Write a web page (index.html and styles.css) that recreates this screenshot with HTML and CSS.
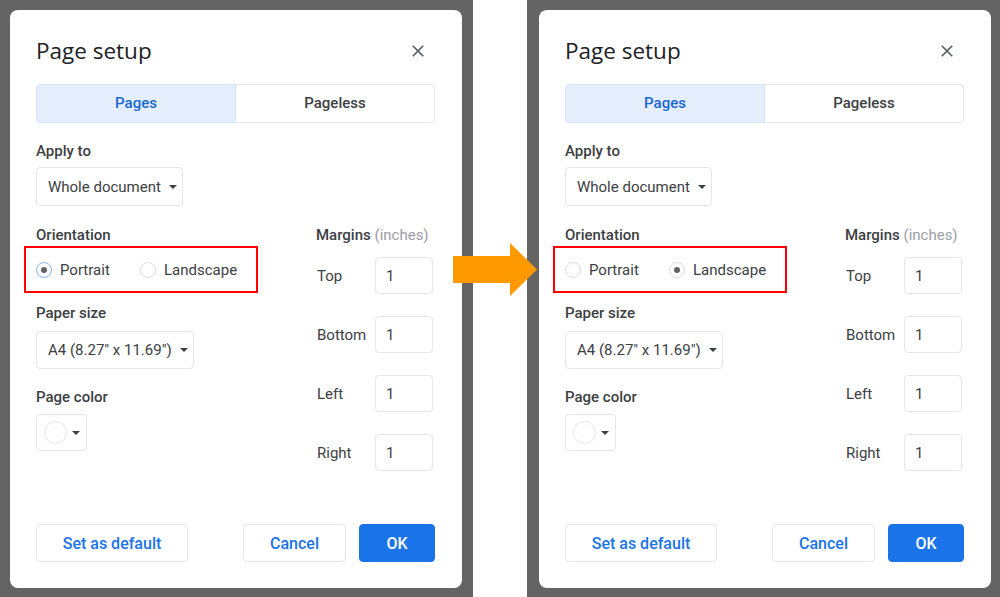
FILE: index.html
```html
<!DOCTYPE html>
<html>
<head>
<meta charset="utf-8">
<link rel="stylesheet" href="styles.css">
</head>
<body>
<div class="stage">
  <div class="panel panel-left">
    <div class="dialog">
      <div class="header">
        <div class="title">Page setup</div>
        <svg class="close" viewBox="0 0 24 24" width="20" height="20"><path d="M19 6.41L17.59 5 12 10.59 6.41 5 5 6.41 10.59 12 5 17.59 6.41 19 12 13.41 17.59 19 19 17.59 13.41 12z" fill="#5f6368"/></svg>
      </div>
      <div class="tabs">
        <div class="tab tab-active">Pages</div>
        <div class="tab">Pageless</div>
      </div>
      <div class="label label-apply">Apply to</div>
      <div class="select select-apply"><span>Whole document</span><span class="caret"></span></div>
      <div class="cols">
        <div class="col-left">
          <div class="label">Orientation</div>
          <div class="redbox">
            <div class="opt opt-first"><span class="radio radio-on radio-focus"></span><span>Portrait</span></div>
            <div class="opt"><span class="radio"></span><span>Landscape</span></div>
          </div>
          <div class="label label-paper">Paper size</div>
          <div class="select select-paper"><span>A4 (8.27" x 11.69")</span><span class="caret"></span></div>
          <div class="label label-color">Page color</div>
          <div class="colorbtn"><span class="swatch"></span><span class="caret"></span></div>
        </div>
        <div class="col-right">
          <div class="label">Margins <span class="muted">(inches)</span></div>
          <div class="mrows">
            <div class="mrow"><span class="mlabel">Top</span><span class="minput">1</span></div>
            <div class="mrow"><span class="mlabel">Bottom</span><span class="minput">1</span></div>
            <div class="mrow"><span class="mlabel">Left</span><span class="minput">1</span></div>
            <div class="mrow"><span class="mlabel">Right</span><span class="minput">1</span></div>
          </div>
        </div>
      </div>
      <div class="footer">
        <div class="btn btn-default">Set as default</div>
        <div class="spacer"></div>
        <div class="btn btn-cancel">Cancel</div>
        <div class="btn btn-ok">OK</div>
      </div>
    </div>
  </div>
  <div class="panel panel-right">
    <div class="dialog">
      <div class="header">
        <div class="title">Page setup</div>
        <svg class="close" viewBox="0 0 24 24" width="20" height="20"><path d="M19 6.41L17.59 5 12 10.59 6.41 5 5 6.41 10.59 12 5 17.59 6.41 19 12 13.41 17.59 19 19 17.59 13.41 12z" fill="#5f6368"/></svg>
      </div>
      <div class="tabs">
        <div class="tab tab-active">Pages</div>
        <div class="tab">Pageless</div>
      </div>
      <div class="label label-apply">Apply to</div>
      <div class="select select-apply"><span>Whole document</span><span class="caret"></span></div>
      <div class="cols">
        <div class="col-left">
          <div class="label">Orientation</div>
          <div class="redbox">
            <div class="opt opt-first"><span class="radio"></span><span>Portrait</span></div>
            <div class="opt"><span class="radio radio-on"></span><span>Landscape</span></div>
          </div>
          <div class="label label-paper">Paper size</div>
          <div class="select select-paper"><span>A4 (8.27" x 11.69")</span><span class="caret"></span></div>
          <div class="label label-color">Page color</div>
          <div class="colorbtn"><span class="swatch"></span><span class="caret"></span></div>
        </div>
        <div class="col-right">
          <div class="label">Margins <span class="muted">(inches)</span></div>
          <div class="mrows">
            <div class="mrow"><span class="mlabel">Top</span><span class="minput">1</span></div>
            <div class="mrow"><span class="mlabel">Bottom</span><span class="minput">1</span></div>
            <div class="mrow"><span class="mlabel">Left</span><span class="minput">1</span></div>
            <div class="mrow"><span class="mlabel">Right</span><span class="minput">1</span></div>
          </div>
        </div>
      </div>
      <div class="footer">
        <div class="btn btn-default">Set as default</div>
        <div class="spacer"></div>
        <div class="btn btn-cancel">Cancel</div>
        <div class="btn btn-ok">OK</div>
      </div>
    </div>
  </div>
  <svg class="arrow" viewBox="0 0 85 54" width="85" height="54"><polygon points="0,13 57,13 57,0 84,26.5 57,53 57,40 0,40" fill="#ff9900"/></svg>
</div>
</body>
</html>
```
FILE: styles.css
```css
html, body {
  margin: 0;
  padding: 0;
  background: #ffffff;
}
body {
  font-family: Roboto, "Liberation Sans", Arial, sans-serif;
  color: #3c4043;
}
.stage {
  position: relative;
  width: 1000px;
  height: 597px;
  display: flex;
  gap: 54px;
  overflow: hidden;
}
.panel {
  width: 473px;
  height: 597px;
  background: #646464;
  box-sizing: border-box;
  padding-top: 10px;
}
.panel-left { padding-left: 10px; }
.panel-right { padding-left: 12px; }
.dialog {
  width: 452px;
  height: 578px;
  background: #ffffff;
  border-radius: 8px;
  box-sizing: border-box;
  padding: 27px 27px 26px 26px;
  display: flex;
  flex-direction: column;
}
.header {
  display: flex;
  align-items: center;
  justify-content: space-between;
  height: 28px;
}
.title {
  font-family: "Open Sans", Roboto, sans-serif;
  font-size: 22.5px;
  line-height: 28px;
  font-weight: 400;
  color: #202124;
}
.close {
  margin-right: 7px;
}
.tabs {
  margin-top: 19px;
  display: flex;
  height: 39px;
}
.tab {
  flex: 1;
  display: flex;
  align-items: center;
  justify-content: center;
  font-size: 15px;
  font-weight: 500;
  color: #3c4043;
  border: 1px solid #e3e5e8;
  box-sizing: border-box;
  padding-bottom: 2px;
}
.tab:first-child {
  border-radius: 4px 0 0 4px;
}
.tab:last-child {
  border-left: none;
  border-radius: 0 4px 4px 0;
}
.tab-active {
  background: #e4eefd;
  border-color: #d2e3fc;
  color: #1967d2;
}
.label {
  font-size: 15px;
  line-height: 20px;
  font-weight: 500;
  color: #3c4043;
}
.muted {
  color: #9aa0a6;
  font-weight: 400;
}
.label-apply { margin-top: 18px; }
.select {
  margin-top: 6px;
  height: 39px;
  box-sizing: border-box;
  border: 1px solid #e3e5e8;
  border-radius: 4px;
  display: flex;
  align-items: center;
  padding-left: 11px;
  font-size: 15px;
  color: #3c4043;
}
.select-apply { width: 147px; }
.select-paper { width: 158px; margin-top: 8px; height: 38px; }
.caret {
  width: 0;
  height: 0;
  border-left: 4.5px solid transparent;
  border-right: 4.5px solid transparent;
  border-top: 4.5px solid #3c4043;
  margin-left: 8px;
}
.cols {
  margin-top: 19px;
  display: flex;
}
.col-left {
  width: 280px;
  display: flex;
  flex-direction: column;
  align-items: flex-start;
}
.redbox {
  margin-top: 1px;
  margin-left: -12px;
  width: 234px;
  height: 47px;
  box-sizing: border-box;
  border: 2px solid #ff0000;
  padding-left: 10px;
  padding-top: 1px;
  display: flex;
  align-items: center;
}
.opt {
  display: flex;
  align-items: center;
  gap: 8px;
  font-size: 15px;
  color: #3c4043;
}
.opt-first { width: 104px; }
.radio {
  width: 16px;
  height: 16px;
  box-sizing: border-box;
  border: 1px solid #dadce0;
  border-radius: 50%;
  display: flex;
  align-items: center;
  justify-content: center;
}
.radio-on::after {
  content: "";
  width: 6px;
  height: 6px;
  border-radius: 50%;
  background: #5f6368;
}
.radio-focus {
  border: 1.5px solid #8ab4f8;
}
.label-paper { margin-top: 10px; }
.label-color { margin-top: 18px; }
.colorbtn {
  margin-top: 7px;
  width: 51px;
  height: 37px;
  box-sizing: border-box;
  border: 1px solid #e3e5e8;
  border-radius: 4px;
  display: flex;
  align-items: center;
  padding-left: 7px;
}
.swatch {
  width: 23px;
  height: 23px;
  box-sizing: border-box;
  border: 1px solid #e3e5e8;
  border-radius: 50%;
}
.colorbtn .caret { margin-left: 5px; }
.col-right {
  display: flex;
  flex-direction: column;
}
.mrows {
  margin-top: 12px;
  display: flex;
  flex-direction: column;
  gap: 22px;
}
.mrow {
  display: flex;
  align-items: center;
}
.mlabel {
  width: 58px;
  padding-left: 1px;
  font-size: 15px;
  color: #3c4043;
}
.minput {
  width: 58px;
  height: 37px;
  box-sizing: border-box;
  border: 1px solid #e3e5e8;
  border-radius: 4px;
  display: flex;
  align-items: center;
  padding-left: 10px;
  font-size: 15px;
  color: #3c4043;
}
.footer {
  margin-top: auto;
  display: flex;
  align-items: center;
  gap: 13px;
}
.spacer { flex: 1; }
.btn {
  height: 38px;
  box-sizing: border-box;
  border: 1px solid #e3e5e8;
  border-radius: 4px;
  display: flex;
  align-items: center;
  justify-content: center;
  font-size: 16px;
  font-weight: 500;
  color: #1a73e8;
}
.btn-default { width: 152px; }
.btn-cancel { width: 103px; }
.btn-ok {
  width: 76px;
  background: #1a73e8;
  border-color: #1a73e8;
  color: #ffffff;
}
.arrow {
  position: absolute;
  left: 453px;
  top: 243px;
}
```
